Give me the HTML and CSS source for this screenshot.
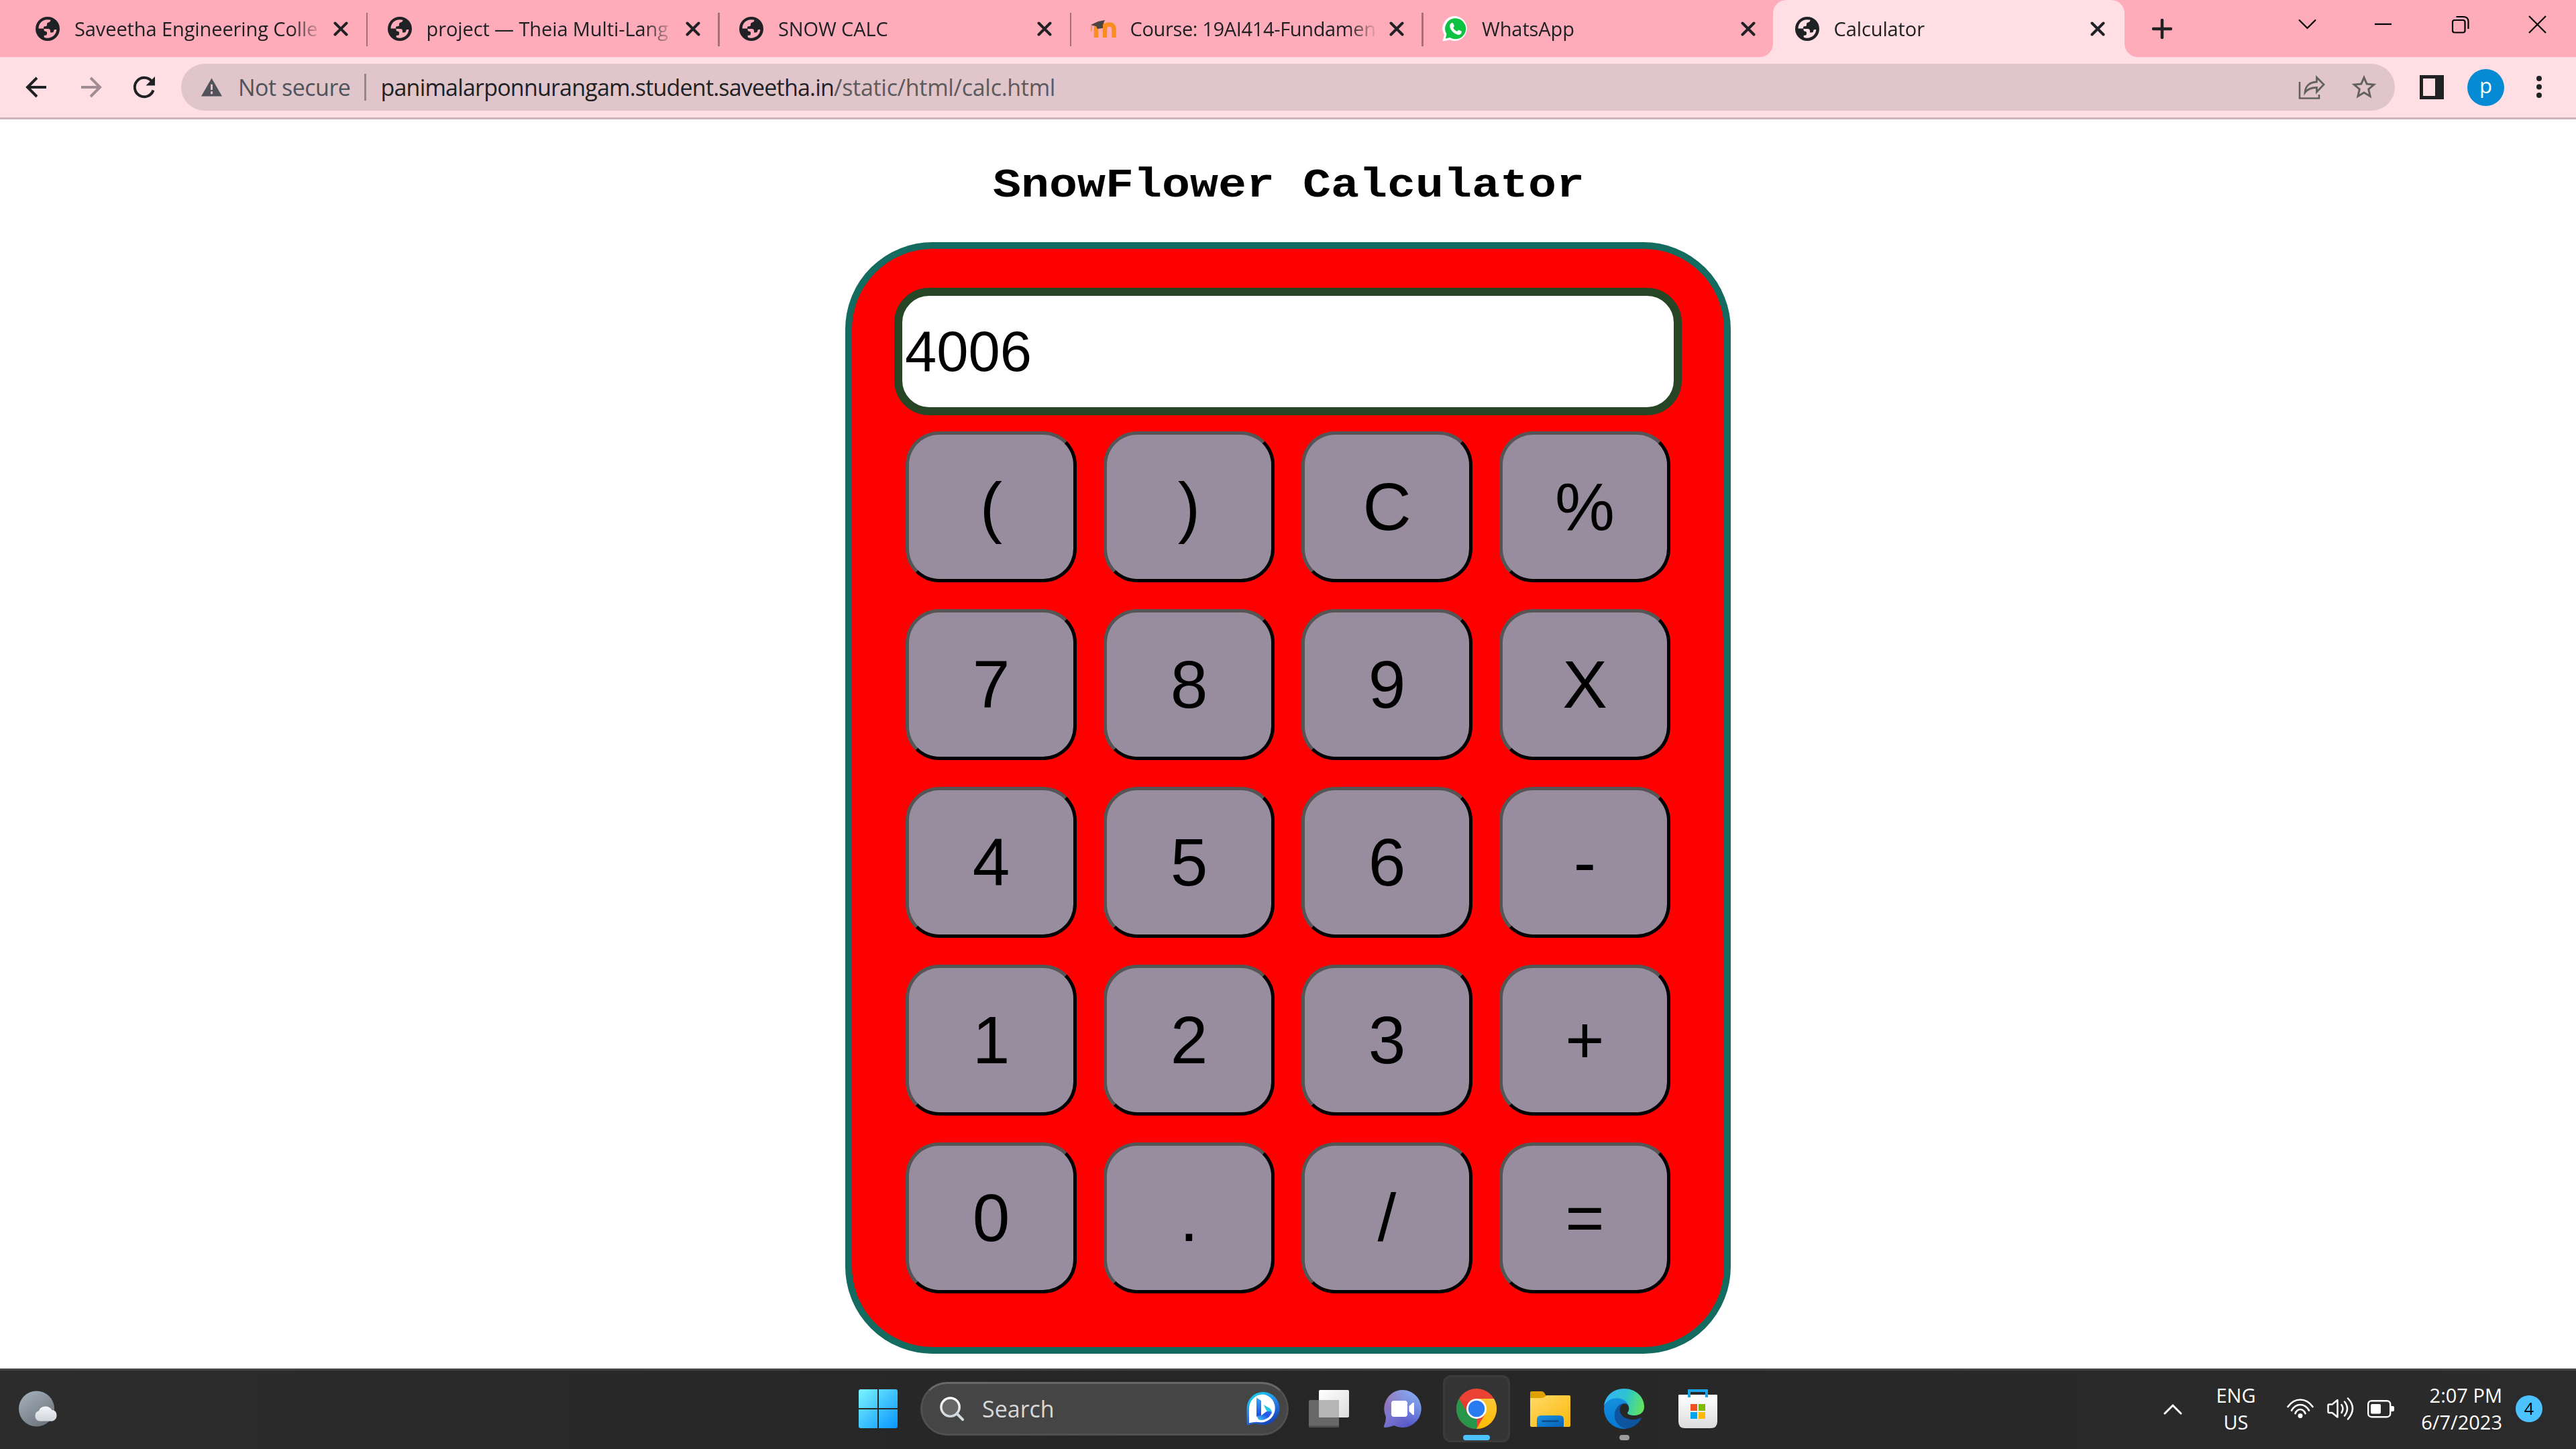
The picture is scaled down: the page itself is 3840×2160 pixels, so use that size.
FILE: index.html
```html
<!DOCTYPE html>
<html lang="en">
<head>
<meta charset="utf-8">
<title>Calculator</title>
<link rel="stylesheet" href="styles.css">
</head>
<body>
<svg class="defs" width="0" height="0" aria-hidden="true">
  <symbol id="globe" viewBox="0 0 36 36">
    <circle cx="18" cy="18" r="18" fill="#202124"/>
    <path d="M4.5 17.5C4.5 10 10 4.5 18 4.3q3.500 0 4.500.5-.2 3.200-3.500 3.700-2 .3-2 2.500v1.500q0 1.700-2 1.700h-1.500q-1.500 0-1.500 1.500v2.300h6.500q3.500 0 3.500 3.300v2.200h2.500q2.700 0 2.700-2.700 0-1.800 1.800-1.800h2.300C31 26 25.500 31.500 17.500 31.700q-2.500 0-4.800-1.200v-2.800h2q2.300 0 2.300-2v-2.200q0-1.800-2-1.800-2.500 0-2.500-2.200v-2z" fill="currentColor"/>
  </symbol>
  <symbol id="close" viewBox="0 0 22 22">
    <path d="M2.500 2.500l17 17M19.500 2.500l-17 17" stroke="#202124" stroke-width="4" stroke-linecap="round"/>
  </symbol>
</svg>

<header class="tabstrip">
  <div class="tab">
    <svg class="favicon globe"><use href="#globe"/></svg>
    <span class="tab-title">Saveetha Engineering Colle</span>
    <svg class="tab-close"><use href="#close"/></svg>
  </div>
  <div class="tab">
    <svg class="favicon globe"><use href="#globe"/></svg>
    <span class="tab-title">project — Theia Multi-Lang</span>
    <svg class="tab-close"><use href="#close"/></svg>
  </div>
  <div class="tab">
    <svg class="favicon globe"><use href="#globe"/></svg>
    <span class="tab-title">SNOW CALC</span>
    <svg class="tab-close"><use href="#close"/></svg>
  </div>
  <div class="tab">
    <svg class="favicon" viewBox="0 0 40 40">
      <path d="M9 33V20q0-6.500 6.500-6.500T22 20v13M22 20q0-6.500 6.500-6.500T35.500 20v13" fill="none" stroke="#f98d1f" stroke-width="6.500"/>
      <path d="M1 14l11-5 10-2-3 7v5l-8 1-2-4-6-1z" fill="#4a4445"/>
      <path d="M2.500 14l-1 10" stroke="#f08c4a" stroke-width="1.500"/>
    </svg>
    <span class="tab-title tab-title-tight">Course: 19AI414-Fundamen</span>
    <svg class="tab-close"><use href="#close"/></svg>
  </div>
  <div class="tab">
    <svg class="favicon" viewBox="0 0 40 40">
      <path d="M20.500 1A18.500 18.500 0 1 1 12 36.500L1.500 38.500 4 29A18.500 18.500 0 0 1 20.500 1z" fill="#fff"/>
      <path d="M20.500 4.300A15.500 15.500 0 1 1 12.500 33L5.700 34.600 7.500 28A15.500 15.500 0 0 1 20.500 4.300z" fill="#0dc143"/>
      <path d="M14.500 11.500c1-.7 2.300-.6 2.800.4l1.500 3.500c.3 1-1.600 2.300-1.500 3 1 2.300 3.500 4.600 5.700 5.300.8 0 1.800-2.300 2.800-2l3.700 1.800c1 .8-.2 4-1.700 4.800-2.800 1.500-7 0-10.300-3-3.300-3-5.300-6.500-5.300-9.300 0-2 .9-3.600 2.300-4.500z" fill="#fff"/>
    </svg>
    <span class="tab-title">WhatsApp</span>
    <svg class="tab-close"><use href="#close"/></svg>
  </div>
  <div class="tab tab-active">
    <svg class="favicon globe"><use href="#globe"/></svg>
    <span class="tab-title">Calculator</span>
    <svg class="tab-close"><use href="#close"/></svg>
  </div>
  <svg class="new-tab" viewBox="0 0 30 30"><path d="M15 2v26M2 15h26" stroke="#202124" stroke-width="4.500" stroke-linecap="round"/></svg>
  <div class="window-controls">
    <svg viewBox="0 0 27 27"><path d="M1 6.500l12.500 12.500L26 6.500" fill="none" stroke="#000" stroke-width="2.200"/></svg>
    <svg viewBox="0 0 27 27"><path d="M1 13h25" stroke="#000" stroke-width="2.200"/></svg>
    <svg viewBox="0 0 27 27"><rect x="2" y="7" width="18.500" height="18.500" rx="3" fill="none" stroke="#000" stroke-width="2.200"/><path d="M7.500 2H18q7.500 0 7.500 7.500V20" fill="none" stroke="#000" stroke-width="2.200"/></svg>
    <svg viewBox="0 0 27 27"><path d="M1 1l25 25M26 1L1 26" stroke="#000" stroke-width="2.200"/></svg>
  </div>
</header>

<nav class="toolbar">
  <svg class="nav-icon" viewBox="0 0 40 40"><path d="M34 20H6M20 6L6 20l14 14" fill="none" stroke="#202124" stroke-width="4"/></svg>
  <svg class="nav-icon" viewBox="0 0 40 40"><path d="M6 20h28M20 6l14 14-14 14" fill="none" stroke="#a08d93" stroke-width="4"/></svg>
  <svg class="nav-icon" viewBox="0 0 40 40"><path d="M33.500 24.500A14.200 14.200 0 1 1 31 11" fill="none" stroke="#202124" stroke-width="4"/><path d="M36 4v13.500H22.500z" fill="#202124"/></svg>
  <div class="omnibox">
    <svg class="warning" viewBox="0 0 32 28"><path d="M16 0l16 28H0z" fill="#50545a"/><path d="M16 9.500v8.500M16 20.500v4" stroke="#e0c5ca" stroke-width="3"/></svg>
    <span class="not-secure">Not secure</span>
    <span class="omni-divider"></span>
    <span class="url">panimalarponnurangam.student.saveetha.in<span class="url-path">/static/html/calc.html</span></span>
    <svg class="share" viewBox="0 0 40 36"><path d="M2 10v24.500h29V29" fill="none" stroke="#62615f" stroke-width="2.600"/><path d="M27.500 3.500v6.500C17 10.500 10.500 16 10 26c4-5.500 9.500-7.500 17.500-7.500V25l10.500-11z" fill="none" stroke="#62615f" stroke-width="2.800"/></svg>
    <svg class="star" viewBox="0 0 24 24"><path d="M22 9.240l-7.190-.62L12 2 9.190 8.630 2 9.240l5.460 4.730L5.820 21 12 17.270 18.180 21l-1.630-7.030L22 9.240zM12 15.400l-3.760 2.270 1-4.280-3.320-2.880 4.380-.38L12 6.100l1.710 4.040 4.380.38-3.320 2.880 1 4.280L12 15.400z" fill="#62615f"/></svg>
  </div>
  <svg class="side-panel" viewBox="0 0 36 36"><path d="M0 0h36v36H0zM5 5v26h18V5z" fill="#202124" fill-rule="evenodd"/></svg>
  <span class="avatar">p</span>
  <svg class="menu" viewBox="0 0 10 36"><g fill="#202124"><circle cx="5" cy="5" r="4"/><circle cx="5" cy="17.500" r="4"/><circle cx="5" cy="30" r="4"/></g></svg>
</nav>

<main class="page">
  <h1>SnowFlower Calculator</h1>
  <section class="calculator">
    <div class="display">4006</div>
    <div class="keys">
      <button>(</button><button>)</button><button>C</button><button>%</button>
      <button>7</button><button>8</button><button>9</button><button>X</button>
      <button>4</button><button>5</button><button>6</button><button>-</button>
      <button>1</button><button>2</button><button>3</button><button>+</button>
      <button>0</button><button>.</button><button>/</button><button>=</button>
    </div>
  </section>
</main>

<footer class="taskbar">
  <svg class="weather" viewBox="0 0 60 60">
    <defs>
      <linearGradient id="moon" x1="0" y1="0" x2=".7" y2="1"><stop offset="0" stop-color="#a9b4bf"/><stop offset="1" stop-color="#6d757d"/></linearGradient>
      <linearGradient id="cloud" x1="0" y1="0" x2="0" y2="1"><stop offset="0" stop-color="#f4f6f8"/><stop offset="1" stop-color="#cfd4d9"/></linearGradient>
    </defs>
    <circle cx="27.500" cy="30" r="26.500" fill="url(#moon)"/>
    <path d="M32 48.500a8 8 0 0 1-1-15.500q2-6.500 9.500-6.500 7 0 10 5.500h1.500q5.500 1.500 5.500 8t-6.500 8.500z" fill="url(#cloud)"/>
  </svg>

  <div class="apps">
    <svg class="start" viewBox="0 0 58 58">
      <defs><linearGradient id="win" gradientUnits="userSpaceOnUse" x1="0" y1="0" x2="58" y2="58"><stop offset="0" stop-color="#7df4ff"/><stop offset=".5" stop-color="#40c4ff"/><stop offset="1" stop-color="#0796ff"/></linearGradient></defs>
      <path d="M3 0h25v28H0V3q0-3 3-3zM30 0h25q3 0 3 3v25H30zM0 30h28v28H3q-3 0-3-3zM30 30h28v25q0 3-3 3H30z" fill="url(#win)"/>
    </svg>
    <div class="search">
      <svg class="magnifier" viewBox="0 0 38 38">
        <defs><linearGradient id="lens" x1="0" y1="0" x2="0" y2="1"><stop offset="0" stop-color="#fff"/><stop offset="1" stop-color="#cfd6dc"/></linearGradient></defs>
        <circle cx="16" cy="16" r="14" fill="#666" stroke="url(#lens)" stroke-width="3.600"/><path d="M26 26l9 9" stroke="#d3dade" stroke-width="4.200" stroke-linecap="round"/>
      </svg>
      <span class="search-text">Search</span>
      <svg class="bing" viewBox="0 0 50 50">
        <defs>
          <linearGradient id="ring" x1="0" y1="0" x2=".5" y2="1"><stop offset="0" stop-color="#0be0e6"/><stop offset=".5" stop-color="#2a8df0"/><stop offset="1" stop-color="#1647b8"/></linearGradient>
          <linearGradient id="bstem" x1="0" y1="0" x2="0" y2="1"><stop offset="0" stop-color="#37a6fb"/><stop offset="1" stop-color="#1b45dc"/></linearGradient>
          <linearGradient id="bbowl" x1="0" y1="1" x2="1" y2="0"><stop offset="0" stop-color="#3fd0f5"/><stop offset=".6" stop-color="#2554e6"/><stop offset="1" stop-color="#2a6cf0"/></linearGradient>
        </defs>
        <path d="M25 0a24.500 24.500 0 1 1-7 48Q10 46 1 50 .3 47 .5 43V24.500A24.500 24.500 0 0 1 25 0z" fill="url(#ring)"/>
        <path d="M25 3.500a21 21 0 1 1-6.500 41.500Q12 44 4 46.300V24.500A21 21 0 0 1 25 3.500z" fill="#fff"/>
        <path d="M15 8.500l7 4.500v22l-5 3.500-2-3z" fill="url(#bstem)"/>
        <path d="M25.500 19l9 5q4 3 3.500 9l-8-5z" fill="#22c9e6"/>
        <path d="M16 36l6-1 8-6q5-1 7.500 1-1 6-7 9.500-8 4.500-13 1z" fill="url(#bbowl)"/>
      </svg>
    </div>
    <div class="app"><svg viewBox="0 0 60 60">
      <defs><linearGradient id="tv" x1="0" y1="0" x2="1" y2="1"><stop offset="0" stop-color="#fff"/><stop offset="1" stop-color="#dcdcdc"/></linearGradient></defs>
      <rect x="15" y="2" width="45" height="41" rx="2" fill="url(#tv)"/>
      <rect x="0" y="17" width="45" height="41" rx="2" fill="#676767"/>
      <path d="M15 17h28q2 0 2 2v24H15z" fill="#b5b5b5"/><path d="M0 55.500h45v.5q0 2-2 2H2q-2 0-2-2z" fill="#4d4d4d"/>
    </svg></div>
    <div class="app"><svg viewBox="0 0 60 60">
      <defs><linearGradient id="chat" x1=".1" y1=".2" x2=".8" y2=".9"><stop offset="0" stop-color="#9b6fae"/><stop offset=".35" stop-color="#7f78cf"/><stop offset="1" stop-color="#5355c8"/></linearGradient>
      <linearGradient id="chat2" x1="1" y1="0" x2=".4" y2=".7"><stop offset="0" stop-color="#84b4f5"/><stop offset="1" stop-color="#84b4f5" stop-opacity="0"/></linearGradient></defs>
      <path d="M30 2a28 28 0 1 1-13 53Q9 58 3 58q-1.500-.5-1-2 3-7 3-14A28 28 0 0 1 30 2z" fill="url(#chat)"/>
      <path d="M30 2a28 28 0 1 1-13 53A28 28 0 0 1 30 2z" fill="url(#chat2)"/>
      <rect x="13" y="18" width="24" height="24" rx="4" fill="#fff"/><path d="M39.500 26l5.500-5q2-1 2 1v16q0 2-2 1l-5.500-5z" fill="#fff"/>
    </svg></div>
    <div class="app app-current"><svg viewBox="0 0 60 60">
      <defs><linearGradient id="cy" x1="0" y1="0" x2="0" y2="1"><stop offset="0" stop-color="#f9c538"/><stop offset="1" stop-color="#fdbd00"/></linearGradient></defs>
      <circle cx="30" cy="30" r="30" fill="#ea4335"/>
      <path d="M4 15L17 37.500 30 45 30.500 60A30 30 0 0 1 4 15z" fill="#28964a"/>
      <path d="M30 15h26A30 30 0 0 1 30 60l13-22.500z" fill="url(#cy)"/>
      <path d="M4 15L17 37.500l4-15z" fill="#e33b2e"/><path d="M4 15l13 22.500L30 45l-14-4z" fill="#28964a"/>
      <circle cx="30" cy="30" r="15" fill="#fff"/><circle cx="30" cy="30" r="12.200" fill="#2b7bf0"/>
    </svg><span class="indicator"></span></div>
    <div class="app"><svg viewBox="0 0 60 60">
      <defs><linearGradient id="folder" x1="0" y1="0" x2="1" y2="1"><stop offset="0" stop-color="#ffd968"/><stop offset="1" stop-color="#fcb90c"/></linearGradient>
      <linearGradient id="fblue" x1="0" y1="0" x2="1" y2="1"><stop offset="0" stop-color="#1a94e0"/><stop offset="1" stop-color="#0560b8"/></linearGradient></defs>
      <path d="M0 6q0-2 2-2h15q3 0 4.500 3l3 5v6H0z" fill="#e0a100"/>
      <path d="M0 14h17q3 0 5-2l2-2h34q2 0 2 2v43q0 2-2 2H2q-2 0-2-2z" fill="url(#folder)"/>
      <path d="M10 57V46q0-6 6-6h28q6 0 6 6v11z" fill="url(#fblue)"/><path d="M18.500 48.500h23" stroke="#0c4a8c" stroke-width="2.300" stroke-linecap="round"/>
    </svg></div>
    <div class="app"><svg viewBox="0 0 24 24">
      <defs><linearGradient id="e1" x1="0" y1=".4" x2="1" y2=".6"><stop offset="0" stop-color="#35b5f5"/><stop offset=".5" stop-color="#2cc3d2"/><stop offset="1" stop-color="#62e65c"/></linearGradient>
      <linearGradient id="e2" x1="0" y1="0" x2="0" y2="1"><stop offset="0" stop-color="#1391dd"/><stop offset="1" stop-color="#0678d4"/></linearGradient></defs>
      <path d="M0 10.500C.5 4.500 5.500 0 12 0c7 0 12 5 12 10.800 0 3.200-2.500 5.200-5.800 5.200-2.500 0-4.200-.7-4.200-1.500 0-.5.900-1 .9-2.700 0-3-3-5.300-7-5.300C3.500 6.500.8 8.500 0 10.500z" fill="url(#e1)"/>
      <path d="M0 12C0 8.500 3.200 5.700 7.500 5.700c4.200 0 7.300 2.700 7.300 5.600 0-1.600-1.300-2.400-2.800-2.400-3 0-5.500 3.500-5.500 7 0 4 3 7.500 7.500 7.900-.7.100-1.300.2-2 .2A12 12 0 0 1 0 12z" fill="url(#e2)"/>
      <path d="M12 8.900c-3.200 0-5.700 3.300-5.700 7 0 4.400 3.700 8.100 8.300 7.700 3.400-.7 6-2.700 7.600-5.700.1-.4-.1-.6-.5-.4-4.700 2.400-12.300.4-12.300-4.900 0-1.600 1-3.200 2.600-3.700z" fill="#0f549f"/>
    </svg><span class="indicator indicator-idle"></span></div>
    <div class="app"><svg viewBox="0 0 60 60">
      <defs><linearGradient id="bag" x1="0" y1="0" x2="0" y2="1"><stop offset="0" stop-color="#fff"/><stop offset="1" stop-color="#dcdcdc"/></linearGradient></defs>
      <path d="M2 9h56q1 0 1 1v39q0 10-10 10H11Q1 59 1 49V10q0-1 1-1z" fill="url(#bag)"/>
      <path d="M17 13V3h26v10" fill="none" stroke="#1aa5e8" stroke-width="4"/>
      <path d="M19 23h10v10H19z" fill="#f25022"/><path d="M31 23h10v10H31z" fill="#7fba00"/><path d="M19 35h10v10H19z" fill="#00a4ef"/><path d="M31 35h10v10H31z" fill="#ffb900"/>
    </svg></div>
  </div>

  <div class="tray">
    <svg class="chevron" viewBox="0 0 28 17"><path d="M2 15L14 3l12 12" fill="none" stroke="#fff" stroke-width="3" stroke-linecap="round"/></svg>
    <div class="lang"><span>ENG</span><span>US</span></div>
    <svg class="wifi" viewBox="0 0 40 40"><g fill="none" stroke="#fff" stroke-width="2.700" stroke-linecap="round"><path d="M1.500 17Q9 6.500 20 6.500T38.500 17"/><path d="M7 22.500Q12 14 20 14t13 8.500"/><path d="M12.500 27Q15 21 20 21t7.500 6"/></g><circle cx="20" cy="30.500" r="3.500" fill="#fff"/></svg>
    <svg class="speaker" viewBox="0 0 40 40"><g fill="none" stroke="#fff" stroke-width="2.500" stroke-linecap="round" stroke-linejoin="round"><path d="M15.500 7v25.500l-8-6.500H3q-1.500 0-1.500-1.500v-9.500q0-1.500 1.500-1.500h4.500z"/><path d="M21.500 14q4 5.500 0 12M26 9.500q8 10 0 21M31 4.500q14 14.500 0 31"/></g></svg>
    <svg class="battery" viewBox="0 0 40 40"><rect x="1.200" y="8.200" width="33" height="24" rx="5" fill="none" stroke="#fff" stroke-width="2.400"/><rect x="5" y="13" width="15" height="14.500" rx="2" fill="#fff"/><path d="M35 16h3q2 0 2 2v4q0 2-2 2h-3z" fill="#fff"/></svg>
    <div class="clock"><span>2:07 PM</span><span>6/7/2023</span></div>
    <span class="badge">4</span>
  </div>
</footer>
</body>
</html>
```
FILE: styles.css
```css
* {
  box-sizing: border-box;
}

body {
  display: flex;
  flex-direction: column;
  width: 3840px;
  height: 2160px;
  margin: 0;
  overflow: hidden;
  background: #fff;
  font-family: "Open Sans", "Noto Sans", sans-serif;
}

svg {
  display: block;
  flex: none;
}

.defs {
  position: absolute;
}

/* Tab strip */
.tabstrip {
  display: flex;
  flex: none;
  align-items: center;
  height: 85px;
  padding-left: 20px;
  background: #ffacba;
}

.tab {
  position: relative;
  display: flex;
  flex: none;
  align-items: center;
  width: 524.5px;
  height: 85px;
  padding-left: 31px;
}

.tab + .tab::before {
  content: "";
  position: absolute;
  left: 1px;
  top: 19px;
  width: 2.5px;
  height: 50px;
  background: #a66f79;
}

.favicon {
  width: 40px;
  height: 40px;
  margin-right: 20px;
}

.globe {
  padding: 2px;
  color: #ffacba;
}

.tab-title {
  width: 374px;
  white-space: nowrap;
  font-size: 29px;
  line-height: 40px;
  letter-spacing: -0.1px;
  color: #202124;
  mask-image: linear-gradient(to right, #000 325px, transparent 370px);
}

.tab-title-tight {
  letter-spacing: -0.35px;
}

.tab-close {
  width: 22px;
  height: 22px;
  margin-left: 12px;
}

.tab-active .tab-close {
  margin-left: 8px;
}

.tab-active {
  border-radius: 20px 20px 0 0;
  background: #ffdee4;
}

.tab + .tab-active::before,
.tab-active::after {
  content: "";
  position: absolute;
  top: 65px;
  bottom: 0;
  width: 20px;
  height: 20px;
}

.tab + .tab-active::before {
  left: -20px;
  background: radial-gradient(circle at 0 0, transparent 19.5px, #ffdee4 20.5px);
}

.tab-active::after {
  right: -20px;
  background: radial-gradient(circle at 100% 0, transparent 19.5px, #ffdee4 20.5px);
}

.tab-active .globe {
  color: #ffdee4;
}

.new-tab {
  width: 30px;
  height: 30px;
  margin-left: 41px;
}

.window-controls {
  display: flex;
  gap: 88px;
  margin: 0 44px 12px auto;
}

.window-controls svg {
  width: 27px;
  height: 27px;
}

.window-controls svg:first-child {
  margin-right: -2px;
}

/* Toolbar */
.toolbar {
  display: flex;
  flex: none;
  align-items: center;
  height: 93px;
  padding: 3px 50px 3px 35px;
  border-bottom: 3px solid #ccb2bb;
  background: #ffdee4;
}

.nav-icon {
  width: 40px;
  height: 40px;
  margin-right: 40px;
}

.omnibox {
  display: flex;
  flex: none;
  align-items: center;
  width: 3300px;
  height: 70px;
  margin-left: -5px;
  padding: 0 24px 0 30px;
  border-radius: 35px;
  background: #e0c5ca;
  font-size: 34px;
  line-height: 48px;
  white-space: nowrap;
}

.warning {
  width: 31px;
  height: 28px;
}

.not-secure {
  width: 188px;
  margin-left: 24px;
  letter-spacing: -0.5px;
  color: #50545a;
}

.omni-divider {
  width: 2.5px;
  height: 40px;
  margin-right: 22px;
  background: #94878b;
}

.url {
  letter-spacing: -0.8px;
  color: #202124;
}

.url-path {
  letter-spacing: -0.3px;
  color: #5c5a5d;
}

.share {
  width: 40px;
  height: 36px;
  margin-left: auto;
}

.star {
  width: 44px;
  height: 44px;
  margin-left: 36px;
}

.side-panel {
  width: 36px;
  height: 36px;
  margin-left: 37px;
}

.avatar {
  width: 55px;
  height: 55px;
  margin-left: 35px;
  border-radius: 50%;
  background: #048bd4;
  color: #fff;
  font-size: 31px;
  line-height: 49px;
  text-align: center;
}

.menu {
  width: 10px;
  height: 36px;
  margin-left: auto;
}

/* Page */
.page {
  display: flex;
  flex: 1;
  flex-direction: column;
  align-items: center;
  min-height: 0;
}

h1 {
  margin: 57px 0 46px;
  padding-left: 2px;
  font: bold 70px/80px "Courier New", "Liberation Mono", monospace;
  color: #000;
  transform: scaleY(0.88);
  transform-origin: 0 59px;
}

.calculator {
  width: 1320px;
  height: 1657px;
  padding: 58px 63px;
  border: 10px solid #146b60;
  border-radius: 130px;
  background: #f00;
  font-family: Arial, "Liberation Sans", sans-serif;
}

.display {
  width: 1174px;
  height: 190px;
  padding-left: 4px;
  border: 12px solid #254525;
  border-radius: 52px;
  background: #fff;
  font-size: 85px;
  line-height: 166px;
}

.keys {
  display: grid;
  grid-template-columns: repeat(4, 255px);
  grid-auto-rows: 225px;
  gap: 40px;
  margin: 24px 0 0 17px;
}

.keys button {
  padding: 0;
  border: 5px solid;
  border-color: #555 #000 #000 #555;
  border-radius: 50px;
  background: #978d9e;
  color: #000;
  font-family: inherit;
  font-size: 100px;
}

/* Taskbar */
.taskbar {
  display: flex;
  flex: none;
  align-items: center;
  height: 120px;
  padding: 0 50px 3px 27px;
  border-top: 3px solid #454545;
  background: linear-gradient(90deg, #2c2c2c, #262626 45%, #272727 60%, #2b2b2b);
  color: #fff;
}

.weather {
  width: 60px;
  height: 60px;
}

.apps {
  display: flex;
  align-items: center;
  margin-left: 1193px;
}

.start {
  width: 58px;
  height: 58px;
}

.search {
  display: flex;
  align-items: center;
  width: 549px;
  height: 80px;
  margin: 0 10px 0 34px;
  padding: 0 10px 0 26px;
  border: 3px solid #505050;
  border-top-color: #686868;
  border-radius: 40px;
  background: #454545;
}

.magnifier {
  width: 37px;
  height: 37px;
}

.search-text {
  margin-left: 26px;
  font-size: 34px;
  color: #d8d8d8;
}

.bing {
  width: 50px;
  height: 50px;
  margin-left: auto;
}

.app {
  position: relative;
  display: flex;
  align-items: center;
  justify-content: center;
  width: 100px;
  height: 100px;
  margin-right: 10px;
}

.app svg {
  width: 60px;
  height: 60px;
}

.app-current {
  border-radius: 12px;
  background: #343434;
  box-shadow: inset 0 0 0 3px #3b3b3b;
}

.indicator {
  position: absolute;
  bottom: 3px;
  left: 30px;
  width: 40px;
  height: 8px;
  border-radius: 4px;
  background: #4cc2ff;
}

.indicator-idle {
  left: 43px;
  width: 15px;
  background: #9c9c9c;
}

.tray {
  display: flex;
  align-items: center;
  margin-left: auto;
  font-size: 29px;
  line-height: 40px;
}

.chevron {
  width: 28px;
  height: 17px;
}

.lang {
  display: flex;
  flex-direction: column;
  width: 70px;
  margin-left: 45px;
  text-align: center;
}

.wifi,
.speaker,
.battery {
  width: 40px;
  height: 40px;
}

.wifi {
  margin-left: 41px;
}

.speaker,
.battery {
  margin-left: 20px;
}

.clock {
  display: flex;
  flex-direction: column;
  width: 161px;
  text-align: right;
}

.badge {
  width: 40px;
  height: 40px;
  margin-left: 20px;
  border-radius: 50%;
  background: #4cc2ff;
  color: #000;
  font-size: 25px;
  line-height: 38px;
  text-align: center;
}
```
